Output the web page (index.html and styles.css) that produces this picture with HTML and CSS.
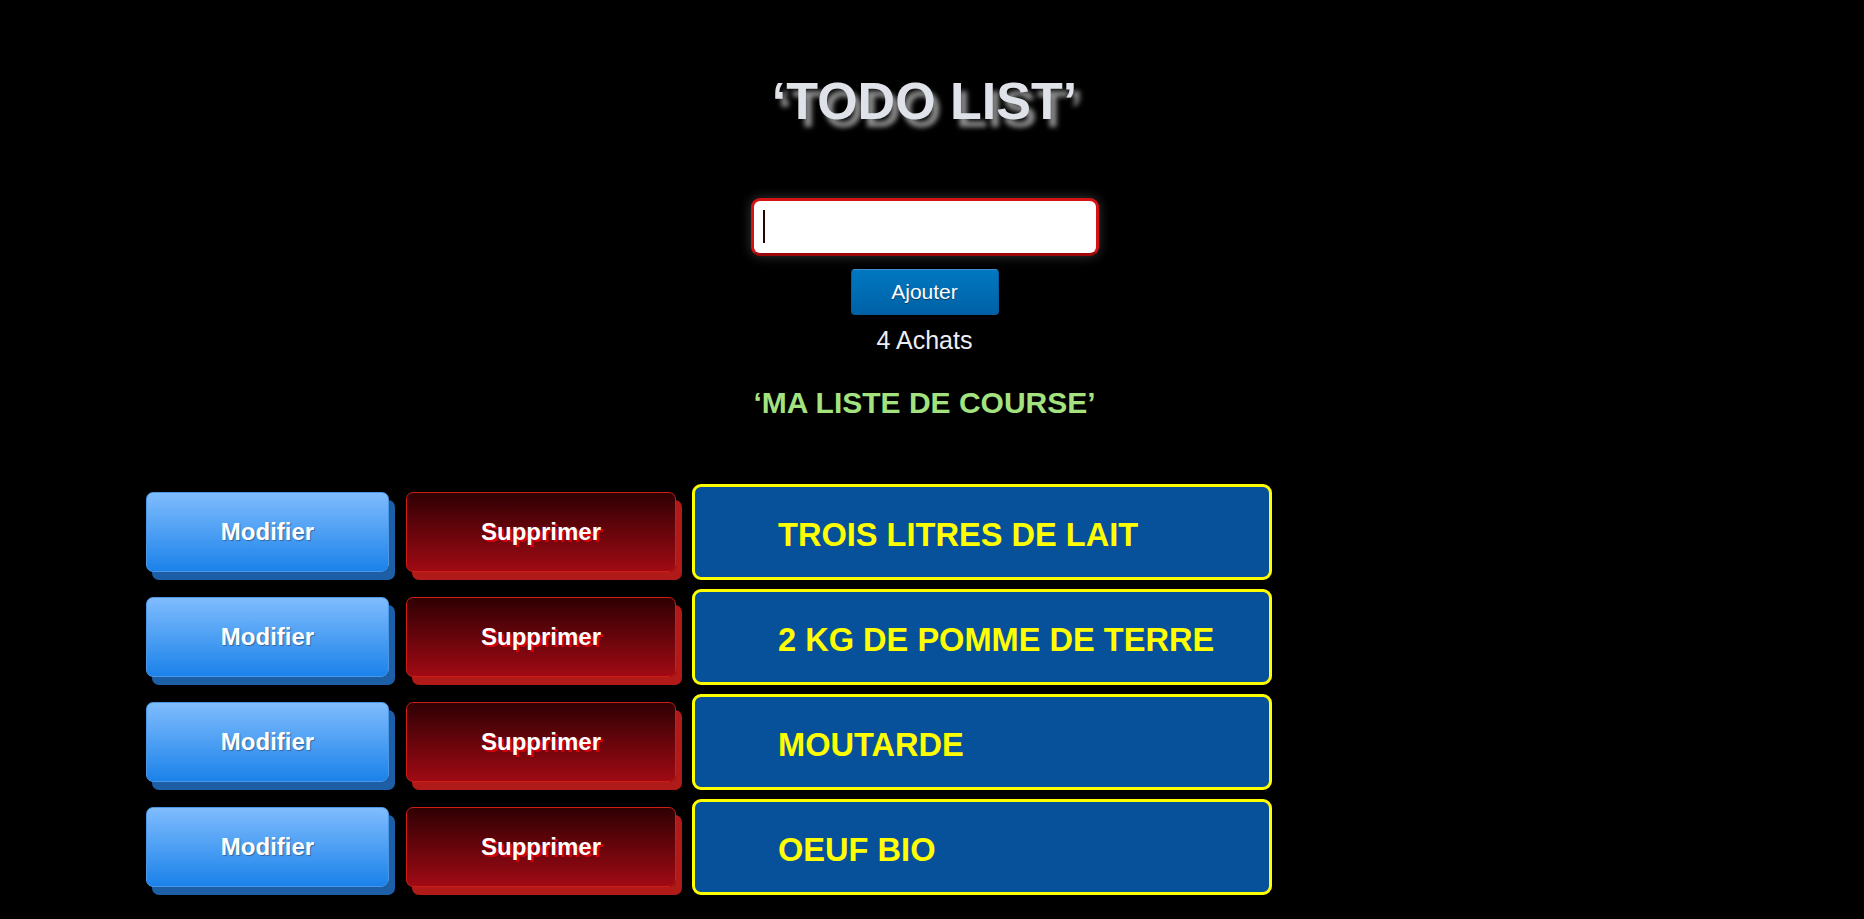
FILE: index.html
```html
<!DOCTYPE html>
<html lang="fr">
<head>
<meta charset="utf-8">
<title>Todo list</title>
<link rel="stylesheet" href="styles.css">
</head>
<body>
<main class="page">
  <header class="top">
    <h1 class="title">‘TODO LIST’</h1>
    <div class="field">
      <input class="entry" type="text" aria-label="Nouvel achat">
      <span class="caret"></span>
    </div>
    <button class="add">Ajouter</button>
    <p class="count">4 Achats</p>
    <h2 class="subtitle">‘MA LISTE DE COURSE’</h2>
  </header>
  <ul class="list">
    <li class="row">
      <button class="btn edit">Modifier</button>
      <button class="btn del">Supprimer</button>
      <div class="item">TROIS LITRES DE LAIT</div>
    </li>
    <li class="row">
      <button class="btn edit">Modifier</button>
      <button class="btn del">Supprimer</button>
      <div class="item">2 KG DE POMME DE TERRE</div>
    </li>
    <li class="row">
      <button class="btn edit">Modifier</button>
      <button class="btn del">Supprimer</button>
      <div class="item">MOUTARDE</div>
    </li>
    <li class="row">
      <button class="btn edit">Modifier</button>
      <button class="btn del">Supprimer</button>
      <div class="item">OEUF BIO</div>
    </li>
  </ul>
</main>
</body>
</html>
```
FILE: styles.css
```css
html {
  background: #000;
  overflow: hidden;
}
body {
  margin: 0;
  padding-right: 15px;
  background: #000;
  font-family: "Liberation Sans", Arial, sans-serif;
  color: #e8e9ee;
}
.top {
  display: flex;
  flex-direction: column;
  align-items: center;
}
.title {
  margin: 71px 0 0;
  font-size: 52px;
  line-height: 60px;
  font-weight: bold;
  color: #dfe2e9;
  text-shadow: 6px 8px 5px rgba(150, 150, 150, 0.95);
}
.field {
  position: relative;
  margin-top: 67px;
}
.entry {
  display: block;
  box-sizing: border-box;
  width: 348px;
  height: 58px;
  margin: 0;
  padding: 0 12px;
  border: 3px solid #d41414;
  border-bottom-color: #9c0606;
  border-radius: 9px;
  background: #fff;
  font-family: "Liberation Sans", Arial, sans-serif;
  font-size: 28px;
  outline: none;
  box-shadow: 0 0 12px rgba(255, 255, 255, 0.22);
}
.caret {
  position: absolute;
  left: 12px;
  top: 12px;
  width: 2px;
  height: 33px;
  background: #2a0000;
}
.add {
  box-sizing: border-box;
  width: 148px;
  height: 46px;
  margin-top: 13px;
  border: 1px solid #0a5d9c;
  border-top-color: #3a8fd0;
  border-radius: 4px;
  background: linear-gradient(#0078c1, #0061a6);
  color: #fff;
  font-family: "Liberation Sans", Arial, sans-serif;
  font-size: 21px;
  text-shadow: 0 1px 1px rgba(0, 0, 0, 0.45);
}
.count {
  margin: 10px 0 0;
  font-size: 25px;
  line-height: 30px;
  color: #eceef4;
}
.subtitle {
  margin: 30px 0 0;
  font-size: 30px;
  line-height: 36px;
  font-weight: bold;
  color: #a3e27f;
}
.list {
  list-style: none;
  margin: 63px 0 0;
  padding: 0 0 0 146px;
  display: flex;
  flex-direction: column;
  gap: 9px;
}
.row {
  display: flex;
  align-items: center;
}
.btn {
  box-sizing: border-box;
  height: 80px;
  border-radius: 7px;
  font-family: "Liberation Sans", Arial, sans-serif;
  font-size: 24px;
  font-weight: bold;
  color: #fff;
  padding: 0;
}
.edit {
  width: 243px;
  border: 1px solid #4b97e6;
  background: linear-gradient(#7fbcfd, #1b82ea);
  box-shadow: 6px 8px 0 #1c5fa6;
  text-shadow: 1px 1px 1px rgba(40, 60, 90, 0.55);
}
.del {
  width: 270px;
  margin-left: 17px;
  border: 1px solid #cf1c16;
  background: linear-gradient(#2f0003, #a00a14);
  box-shadow: 6px 8px 0 #b01a18;
  text-shadow: 2px 2px 0 #d4000c;
}
.item {
  box-sizing: border-box;
  width: 580px;
  height: 96px;
  margin-left: 16px;
  padding: 5px 0 0 83px;
  display: flex;
  align-items: center;
  border: 3px solid #ffff00;
  border-radius: 9px;
  background: #07509a;
  color: #ffff00;
  font-size: 32.6px;
  font-weight: bold;
}
```
